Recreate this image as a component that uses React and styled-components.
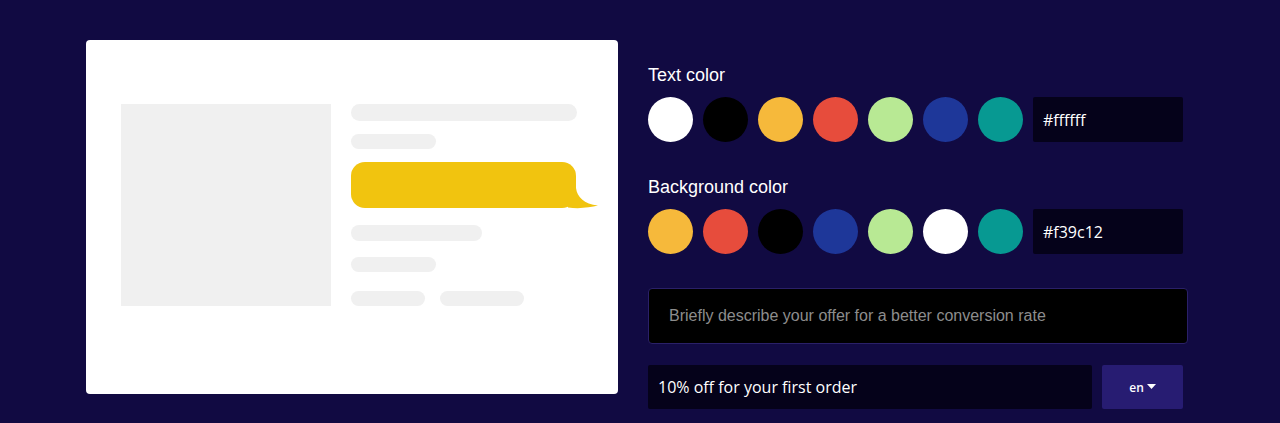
import React from 'react';
import styled, { createGlobalStyle } from 'styled-components';

const GlobalStyle = createGlobalStyle`
  html, body {
    margin: 0;
    padding: 0;
    background: #110a42;
  }
  body {
    font-family: "Liberation Sans", Arial, sans-serif;
  }
`;

const Page = styled('div')`
  width: 1280px;
  height: 423px;
  box-sizing: border-box;
  padding: 40px 0 0 86px;
  display: flex;
  align-items: flex-start;
  gap: 30px;
  overflow: hidden;
`;

const Preview = styled('div')`
  width: 532px;
  height: 354px;
  box-sizing: border-box;
  background: #ffffff;
  border-radius: 4px;
  padding: 64px 35px;
  display: flex;
  gap: 20px;
`;

const ImageBlock = styled('div')`
  width: 210px;
  height: 202px;
  background: #f0f0f0;
`;

const Lines = styled('div')`
  display: flex;
  flex-direction: column;
`;

const Line = styled('div')`
  width: ${p => p.w}px;
  height: ${p => p.h || 15}px;
  margin-top: ${p => p.mt || 0}px;
  border-radius: 10px;
  background: #f0f0f0;
`;

const LineRow = styled('div')`
  display: flex;
  gap: 15px;
  margin-top: ${p => p.mt || 0}px;
`;

const Bubble = styled('div')`
  position: relative;
  width: 225px;
  height: 46px;
  margin-top: 13px;
  border-radius: 14px;
  background: #f1c40f;

  svg {
    position: absolute;
    left: 217px;
    top: 26px;
  }
`;

const Controls = styled('div')`
  width: 540px;
  margin-top: 25px;
  display: flex;
  flex-direction: column;
`;

const Label = styled('div')`
  font-size: 18px;
  line-height: 20px;
  color: #ffffff;
  margin-top: ${p => p.mt || 0}px;
`;

const SwatchRow = styled('div')`
  display: flex;
  align-items: center;
  gap: 10px;
  margin-top: 12px;
`;

const Swatch = styled('div')`
  width: 45px;
  height: 45px;
  border-radius: 50%;
  background: ${p => p.color};
  cursor: pointer;
`;

const HexInput = styled('div')`
  width: 150px;
  height: 45px;
  box-sizing: border-box;
  padding: 0 10px;
  display: flex;
  align-items: center;
  background: #05021a;
  border-radius: 2px;
  color: #ffffff;
  font-family: "Open Sans", "Noto Sans", sans-serif;
  font-size: 16px;
`;

const OfferBox = styled('div')`
  width: 540px;
  height: 56px;
  box-sizing: border-box;
  margin-top: 34px;
  padding: 0 20px;
  display: flex;
  align-items: center;
  background: #000000;
  border: 1px solid #2a2068;
  border-radius: 4px;
  color: #8d8d8d;
  font-size: 16px;
`;

const BottomRow = styled('div')`
  display: flex;
  gap: 10px;
  margin-top: 21px;
`;

const TextInput = styled('div')`
  width: 444px;
  height: 44px;
  box-sizing: border-box;
  padding: 0 10px;
  display: flex;
  align-items: center;
  background: #05021a;
  border-radius: 2px;
  color: #ffffff;
  font-family: "Open Sans", "Noto Sans", sans-serif;
  font-size: 16px;
`;

const LangButton = styled('div')`
  width: 81px;
  height: 44px;
  display: flex;
  align-items: center;
  justify-content: center;
  gap: 3px;
  background: #271c72;
  border-radius: 2px;
  color: #ffffff;
  font-family: "Open Sans", "Noto Sans", sans-serif;
  font-size: 12px;
  font-weight: 600;
`;

const textColors = ['#ffffff', '#000000', '#f6b93b', '#e74c3c', '#b8e994', '#1e3799', '#079992'];
const bgColors = ['#f6b93b', '#e74c3c', '#000000', '#1e3799', '#b8e994', '#ffffff', '#079992'];

const Tail = () => (
  <svg width="30" height="21" viewBox="0 0 30 21">
    <path d="M0 0 H8 C9 9 16 16 30 17.6 C22 19.6 11 21 0 19.5 Z" fill="#f1c40f" />
  </svg>
);

const Caret = () => (
  <svg width="9" height="6" viewBox="0 0 9 6">
    <path d="M0 0 H9 L4.5 5 Z" fill="#ffffff" />
  </svg>
);

const ColorPicker = ({ label, colors, value, mt }) => (
  <>
    <Label mt={mt}>{label}</Label>
    <SwatchRow>
      {colors.map(c => <Swatch key={c} color={c} />)}
      <HexInput>{value}</HexInput>
    </SwatchRow>
  </>
);

const App = () => (
  <>
    <GlobalStyle />
    <Page>
      <Preview>
        <ImageBlock />
        <Lines>
          <Line w={226} h={17} />
          <Line w={85} mt={13} />
          <Bubble><Tail /></Bubble>
          <Line w={131} h={16} mt={17} />
          <Line w={85} mt={16} />
          <LineRow mt={19}>
            <Line w={74} />
            <Line w={84} />
          </LineRow>
        </Lines>
      </Preview>
      <Controls>
        <ColorPicker label="Text color" colors={textColors} value="#ffffff" />
        <ColorPicker label="Background color" colors={bgColors} value="#f39c12" mt={35} />
        <OfferBox>Briefly describe your offer for a better conversion rate</OfferBox>
        <BottomRow>
          <TextInput>10% off for your first order</TextInput>
          <LangButton>en <Caret /></LangButton>
        </BottomRow>
      </Controls>
    </Page>
  </>
);

export default App;
